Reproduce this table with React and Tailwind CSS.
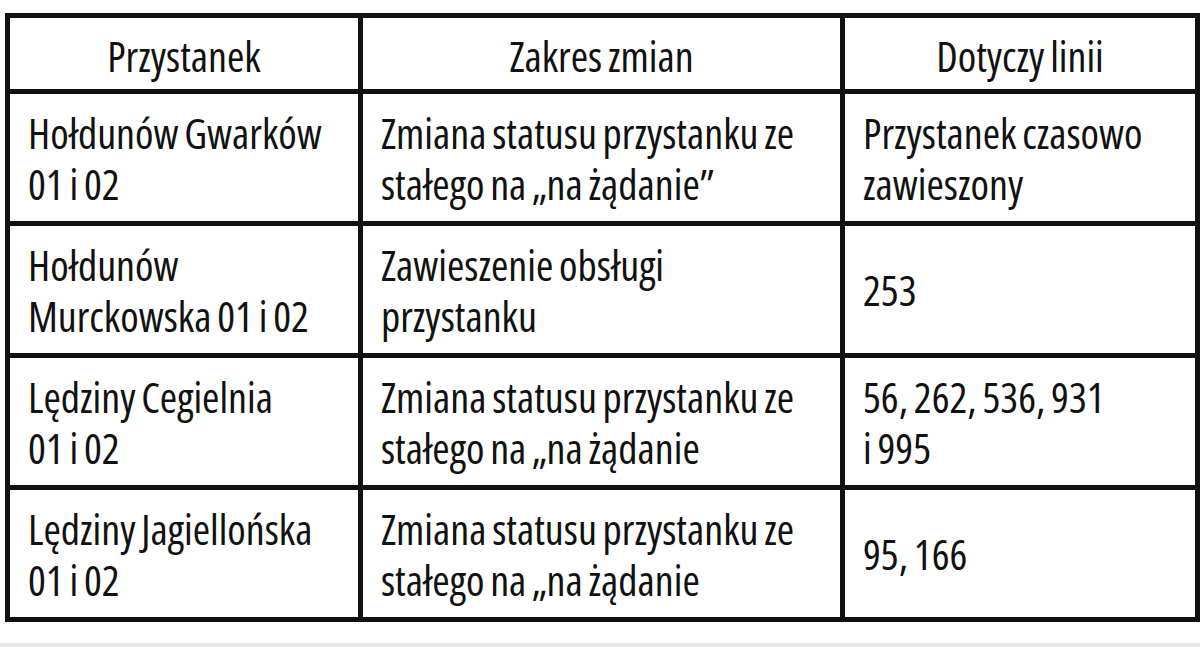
import React from 'react';

const rows = [
  {
    stop: ['Hołdunów Gwarków', '01 i 02'],
    change: ['Zmiana statusu przystanku ze', 'stałego na „na żądanie”'],
    lines: ['Przystanek czasowo', 'zawieszony'],
  },
  {
    stop: ['Hołdunów', 'Murckowska 01 i 02'],
    change: ['Zawieszenie obsługi', 'przystanku'],
    lines: ['253'],
  },
  {
    stop: ['Lędziny Cegielnia', '01 i 02'],
    change: ['Zmiana statusu przystanku ze', 'stałego na „na żądanie'],
    lines: ['56, 262, 536, 931', 'i 995'],
  },
  {
    stop: ['Lędziny Jagiellońska', '01 i 02'],
    change: ['Zmiana statusu przystanku ze', 'stałego na „na żądanie'],
    lines: ['95, 166'],
  },
];

const Cell = ({ text }) => (
  <td className="border-[5px] border-[#111] px-[18px] align-middle">
    {text.map((t, i) => (
      <div key={i} className="whitespace-nowrap">{t}</div>
    ))}
  </td>
);

export default function App() {
  return (
    <div
      className="h-[647px] flex flex-col bg-white text-[#111] text-[42px] leading-[51px] [word-spacing:-2px]"
      style={{ fontFamily: "'Open Sans', sans-serif", fontStretch: '75%', fontWeight: 370 }}
    >
      <div className="pt-[13px] pl-[5px]">
        <table className="border-collapse w-[1195px] table-fixed">
          <colgroup>
            <col className="w-[353px]" />
            <col className="w-[482px]" />
            <col />
          </colgroup>
          <thead>
            <tr className="h-[76px]">
              <th className="border-[5px] border-[#111] font-[370] text-center pt-[3px]">Przystanek</th>
              <th className="border-[5px] border-[#111] font-[370] text-center pt-[3px]">Zakres zmian</th>
              <th className="border-[5px] border-[#111] font-[370] text-center pt-[3px]">Dotyczy linii</th>
            </tr>
          </thead>
          <tbody>
            {rows.map((r, i) => (
              <tr key={i} className="h-[132px]">
                <Cell text={r.stop} />
                <Cell text={r.change} />
                <Cell text={r.lines} />
              </tr>
            ))}
          </tbody>
        </table>
      </div>
      <div className="mt-auto h-[4px] bg-[#e6e8e8]" />
    </div>
  );
}
